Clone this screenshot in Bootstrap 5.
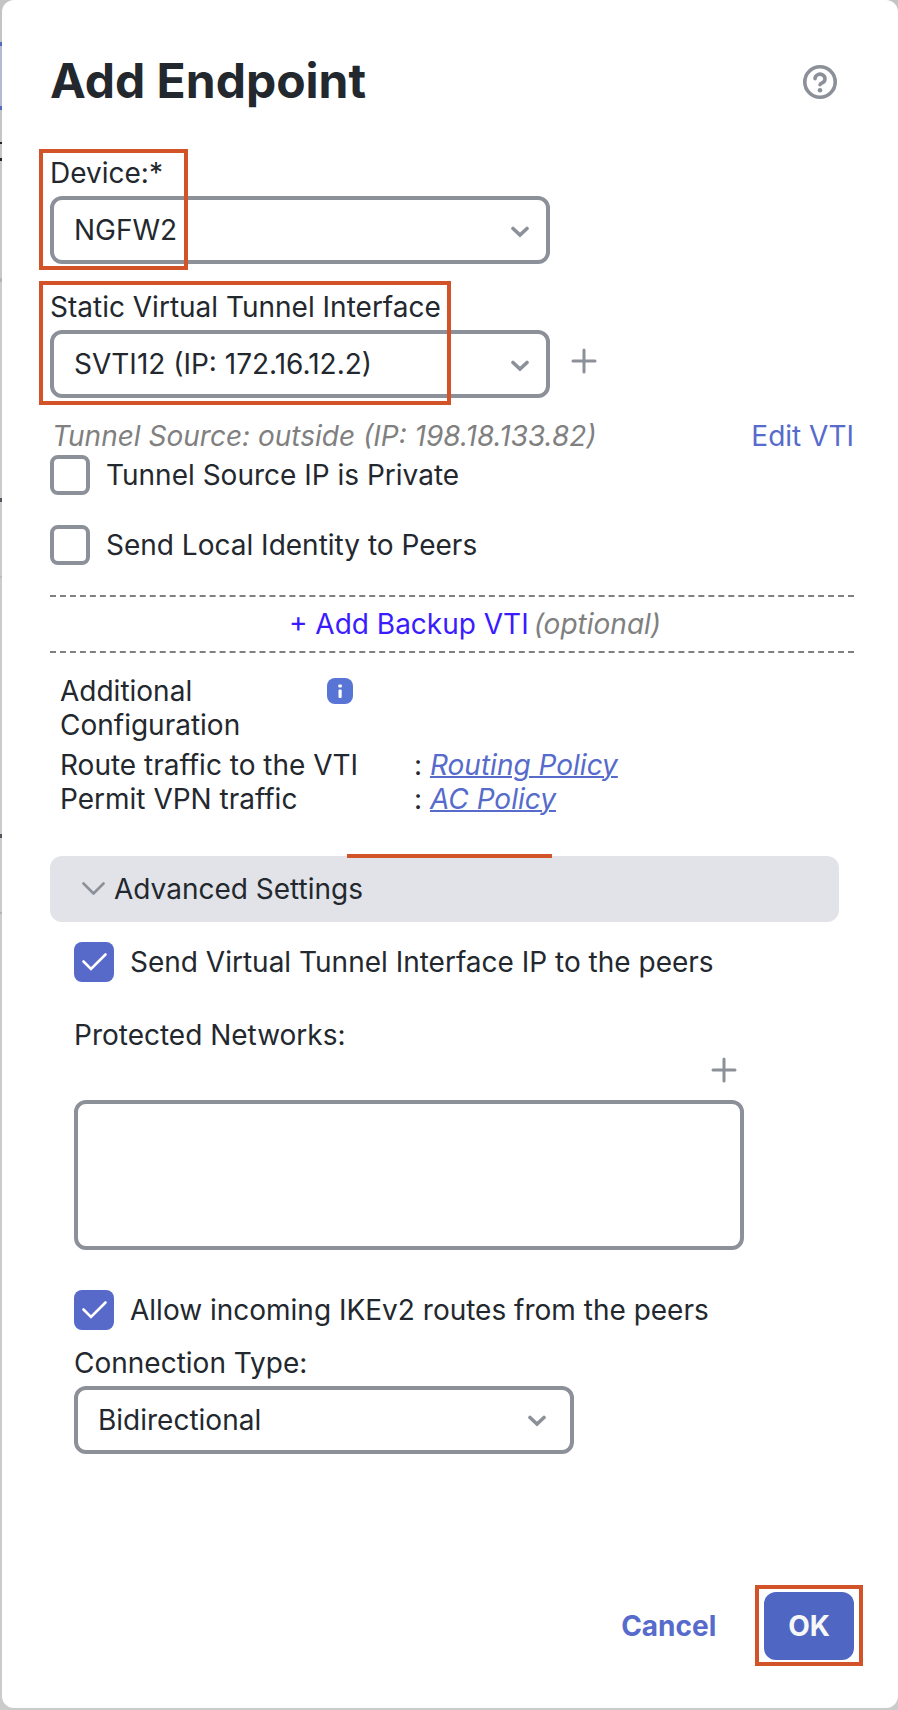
<!DOCTYPE html>
<html lang="en">
<head>
<meta charset="utf-8">
<meta name="viewport" content="width=device-width, initial-scale=1">
<title>Add Endpoint</title>
<link href="https://cdn.jsdelivr.net/npm/bootstrap@5.3.0/dist/css/bootstrap.min.css" rel="stylesheet">
<style>
  :root { --ink: #23282e; --line: #8b9099; --link: #566bcb; --flag: #d15327; }
  body {
    font: 400 28px/34px Inter, "Liberation Sans", sans-serif;
    color: var(--ink);
    /* dimmed page behind the dialog */
    background: linear-gradient(#c4c4c4 0 42px, #566bb8 42px 46px, #b6b9d0 46px 106px, #566bb8 106px 110px, #c6c6c6 110px 142px, #222 142px 144px, #c6c6c6 144px 158px, #222 158px 161px, #c8c8c8 161px 278px, #b4b4ba 278px 282px, #cbcbcb 282px 498px, #55555f 498px 502px, #cbcbcb 502px 576px, #bbb 576px 578px, #cbcbcb 578px 834px, #55555f 834px 838px, #cbcbcb 838px 912px, #b4b4ba 912px 914px, #cbcbcb 914px) no-repeat #cbcbcb;
  }
  .dialog { min-height: calc(100vh - 2px); margin: 0 0 2px 2px; padding: 54px 44px 48px 48px; border-radius: 12px; }
  .dialog-title { font-size: 48px; line-height: 54px; font-weight: 700; }
  .dialog-head { height: 56px; }
  .dialog-form { padding-top: 46px; }
  .icon-btn { line-height: 0; color: var(--line); background: none; border: 0; padding: 0; }
  .icon-btn svg, .glyph { display: block; fill: none; stroke: currentColor; stroke-linecap: round; stroke-linejoin: round; }
  .glyph { color: var(--line); }
  .field { width: 500px; max-width: 100%; }
  .field label { display: block; margin-bottom: 6px; white-space: nowrap; }
  .form-select, .form-control { border: 4px solid var(--line); border-radius: 12px; color: var(--ink); background-color: #fff; }
  .form-select {
    font-size: 28px; line-height: 34px; height: 68px; padding: 13px 60px 13px 20px;
    background-image: url("data:image/svg+xml,%3Csvg xmlns='http://www.w3.org/2000/svg' viewBox='0 0 18 12'%3E%3Cpath d='M2 2.500l7 6.500 7-6.500' fill='none' stroke='%238b9099' stroke-width='3.600' stroke-linecap='round'/%3E%3C/svg%3E");
    background-size: 18px 12px; background-position: right 17px top 26px;
  }
  .select-inset { background-position: right 24px top 25px; }
  .networks { height: 150px; resize: none; }
  .tunnel-row { margin-top: 26px; }
  .source-row { margin-top: 21px; padding-bottom: 2px; }
  .tick-row { display: flex; align-items: center; gap: 16px; }
  .tick-row + .tick-row, .backup { margin-top: 30px; }
  .tick-row .form-check-input { flex: none; width: 40px; height: 40px; margin: 0; border: 4px solid var(--line); border-radius: 8px; }
  .tick-row .form-check-input:checked {
    border: 0; background-color: #5769c9; background-size: 40px 40px;
    background-image: url("data:image/svg+xml,%3Csvg xmlns='http://www.w3.org/2000/svg' viewBox='0 0 40 40'%3E%3Cpath d='M9.500 19.500l7.500 7.500L31.500 12.500' fill='none' stroke='%23fff' stroke-width='2.600' stroke-linecap='round'/%3E%3C/svg%3E");
  }
  .muted-note { color: #808080; }
  .source-row .muted-note { padding-left: 2px; }
  a { color: var(--link); text-decoration: none; }
  .backup { gap: 5px; padding: 10px 0 10px 46px; border-top: 2px dashed #808080; border-bottom: 2px dashed #808080; }
  .backup button { color: #3a1cff; background: none; border: 0; padding: 0; line-height: 34px; }
  .config { display: grid; grid-template-columns: 267px 87px 1fr; margin: 21px 0 40px 10px; }
  .config .wide { grid-column: span 2; }
  .config a { text-decoration: underline; text-decoration-thickness: 2px; }
  .config .head { margin-bottom: 6px; padding-right: 60px; }
  .advanced-bar { height: 66px; margin-right: 15px; padding: 0 32px; gap: 9px; border: 0; border-radius: 12px; background: #e1e3e8; color: var(--ink); }
  .advanced-wrap { display: grid; }
  .advanced-body { padding: 20px 0 0 24px; }
  .networks-box { width: 670px; max-width: 100%; margin: 36px 0 40px; }
  .btn { font-size: 28px; line-height: 34px; font-weight: 700; border: 0; border-radius: 12px; }
  .btn-cancel { color: var(--link); padding: 17px 0; }
  .btn-ok, .btn-ok:hover { color: #f7f7f7; background: #4f67c3; padding: 17px 24px; }
  .actions { gap: 48px; padding-top: 128px; }
  /* highlight frames laid over the form */
  .flag { position: absolute; border: 4px solid var(--flag); pointer-events: none; }
  .flag-device { inset: -7px auto -6px -11px; width: 149px; }
  .flag-tunnel { inset: -9px auto -7px -11px; width: 412px; }
  .flag-ok { inset: -7px -9px -6px -9px; }
  .flag-line { top: -2px; left: 297px; width: 205px; height: 4px; border-width: 2px; }
</style>
</head>
<body>
<main class="dialog bg-white d-flex flex-column">
  <header class="dialog-head d-flex justify-content-between align-items-start">
    <h1 class="dialog-title mb-0">Add Endpoint</h1>
    <button class="icon-btn me-3 align-self-center" type="button" aria-label="Help">
      <svg width="36" height="36" viewBox="0 0 36 36" stroke-width="3.600"><circle cx="18" cy="18" r="15.200"/><path d="M13 14.600a5 4.600 0 1 1 7.600 4.100q-2.600 1.300-2.600 2"/><circle cx="18" cy="26.200" r="2.300" fill="currentColor" stroke="none"/></svg>
    </button>
  </header>

  <form class="dialog-form d-flex flex-column flex-grow-1">
    <div class="field position-relative">
      <label for="device">Device:*</label>
      <select id="device" class="form-select"><option>NGFW2</option></select>
      <span class="flag flag-device"></span>
    </div>

    <div class="tunnel-row d-flex align-items-end gap-3">
      <div class="field position-relative">
        <label for="svti">Static Virtual Tunnel Interface</label>
        <select id="svti" class="form-select"><option>SVTI12 (IP: 172.16.12.2)</option></select>
        <span class="flag flag-tunnel"></span>
      </div>
      <button class="icon-btn mb-4" type="button" aria-label="Add interface">
        <svg width="36" height="26" viewBox="0 0 36 26" stroke-width="3"><path d="M18 2v22M7 13h22"/></svg>
      </button>
    </div>

    <div class="source-row d-flex justify-content-between">
      <em class="muted-note">Tunnel Source: outside (IP: 198.18.133.82)</em>
      <a href="#">Edit VTI</a>
    </div>
    <div class="tick-row">
      <input class="form-check-input" type="checkbox" id="private"><label for="private">Tunnel Source IP is Private</label>
    </div>
    <div class="tick-row">
      <input class="form-check-input" type="checkbox" id="identity"><label for="identity">Send Local Identity to Peers</label>
    </div>

    <div class="backup d-flex justify-content-center">
      <button type="button">+ Add Backup VTI</button>
      <em class="muted-note">(optional)</em>
    </div>

    <div class="config">
      <div class="head">Additional Configuration</div>
      <div class="wide pt-1">
        <svg width="26" height="26" viewBox="0 0 26 26" class="d-block" role="img" aria-label="Information"><rect width="26" height="26" rx="8" fill="#5874d4"/><rect x="11.300" y="6.500" width="3.600" height="3" rx="1" fill="#fff"/><rect x="11.500" y="11.500" width="3.200" height="8.500" rx="1" fill="#fff"/></svg>
      </div>
      <div class="wide">Route traffic to the VTI</div><div>: <a href="#"><em>Routing Policy</em></a></div>
      <div class="wide">Permit VPN traffic</div><div>: <a href="#"><em>AC Policy</em></a></div>
    </div>

    <section class="position-relative advanced-wrap">
      <button class="advanced-bar d-flex align-items-center" type="button" aria-expanded="true">
        <svg class="glyph" width="23" height="14" viewBox="0 0 23 14" stroke-width="2.600"><path d="M1.500 1.500l10 10 10-10"/></svg>
        Advanced Settings
      </button>
      <span class="flag flag-line"></span>
    </section>

    <div class="advanced-body">
      <div class="tick-row">
        <input class="form-check-input" type="checkbox" id="sendip" checked><label for="sendip">Send Virtual Tunnel Interface IP to the peers</label>
      </div>
      <div class="networks-box">
        <label class="d-block" for="networks">Protected Networks:</label>
        <div class="d-flex justify-content-end mt-1 pe-1 pb-3">
          <button class="icon-btn" type="button" aria-label="Add network">
            <svg width="32" height="28" viewBox="0 0 32 28" stroke-width="3"><path d="M16 3v22M5 14h22"/></svg>
          </button>
        </div>
        <textarea id="networks" class="form-control networks"></textarea>
      </div>
      <div class="tick-row">
        <input class="form-check-input" type="checkbox" id="ikev2" checked><label for="ikev2">Allow incoming IKEv2 routes from the peers</label>
      </div>
      <div class="field mt-3">
        <label for="conn">Connection Type:</label>
        <select id="conn" class="form-select select-inset"><option>Bidirectional</option></select>
      </div>
    </div>

    <footer class="actions d-flex justify-content-end align-items-center mt-auto">
      <button class="btn btn-cancel" type="button">Cancel</button>
      <div class="position-relative">
        <button class="btn btn-ok" type="submit">OK</button>
        <span class="flag flag-ok"></span>
      </div>
    </footer>
  </form>
</main>
<script src="https://cdn.jsdelivr.net/npm/bootstrap@5.3.0/dist/js/bootstrap.bundle.min.js"></script>
</body>
</html>
